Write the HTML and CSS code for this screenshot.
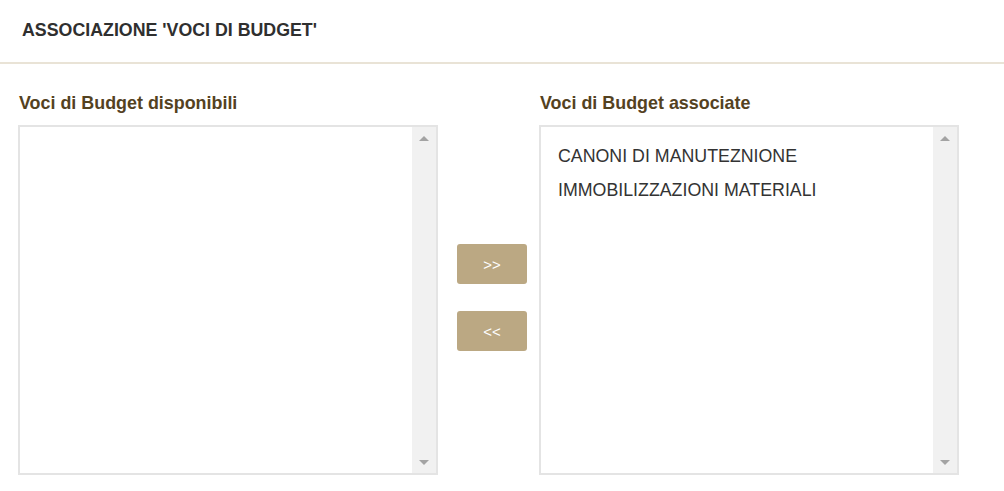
FILE: index.html
```html
<!DOCTYPE html>
<html>
<head>
<meta charset="utf-8">
<link rel="stylesheet" href="styles.css">
</head>
<body>
<div class="header">
  <h1 class="title">ASSOCIAZIONE 'VOCI DI BUDGET'</h1>
</div>
<div class="content">
  <div class="col">
    <div class="label">Voci di Budget disponibili</div>
    <div class="listbox">
      <div class="items"></div>
      <div class="scrollbar">
        <span class="arrow up"></span>
        <span class="arrow down"></span>
      </div>
    </div>
  </div>
  <div class="buttons">
    <button class="btn">&gt;&gt;</button>
    <button class="btn">&lt;&lt;</button>
  </div>
  <div class="col">
    <div class="label">Voci di Budget associate</div>
    <div class="listbox">
      <div class="items">
        <div class="item">CANONI DI MANUTEZNIONE</div>
        <div class="item">IMMOBILIZZAZIONI MATERIALI</div>
      </div>
      <div class="scrollbar">
        <span class="arrow up"></span>
        <span class="arrow down"></span>
      </div>
    </div>
  </div>
</div>
</body>
</html>
```

FILE: styles.css
```css
* { box-sizing: border-box; }
html, body {
  margin: 0;
  padding: 0;
  background: #fff;
  font-family: "Liberation Sans", Arial, sans-serif;
}
.header {
  height: 64px;
  border-bottom: 2px solid #e9e3d6;
  display: flex;
  align-items: center;
  padding-left: 22px;
  padding-bottom: 2px;
}
.title {
  margin: 0;
  font-size: 17.8px;
  font-weight: bold;
  color: #2f2f2f;
  letter-spacing: 0;
}
.content {
  display: flex;
  padding: 29px 0 0 18px;
}
.col {
  display: flex;
  flex-direction: column;
  width: 420px;
}
.label {
  font-size: 17.9px;
  font-weight: bold;
  color: #54421f;
  height: 32px;
  padding-left: 1px;
}
.listbox {
  height: 350px;
  border: 2px solid #e4e4e4;
  display: flex;
}
.items {
  flex: 1;
  padding: 17px 0 0 17px;
}
.item {
  font-size: 17.8px;
  color: #333;
  height: 34px;
  line-height: 24px;
}
.scrollbar {
  width: 24px;
  background: #f1f1f1;
  display: flex;
  flex-direction: column;
  justify-content: space-between;
  align-items: center;
  padding: 9px 0 8px;
}
.arrow {
  width: 0;
  height: 0;
  border-left: 5px solid transparent;
  border-right: 5px solid transparent;
}
.arrow.up { border-bottom: 5px solid #a3a3a3; }
.arrow.down { border-top: 5px solid #a3a3a3; }
.buttons {
  display: flex;
  flex-direction: column;
  gap: 27px;
  padding-top: 151px;
  margin: 0 12px 0 19px;
}
.btn {
  width: 70px;
  height: 40px;
  border: none;
  border-radius: 3px;
  background: #bba883;
  color: #fff;
  font-family: "Liberation Sans", Arial, sans-serif;
  font-size: 15px;
  padding: 0;
}
```
